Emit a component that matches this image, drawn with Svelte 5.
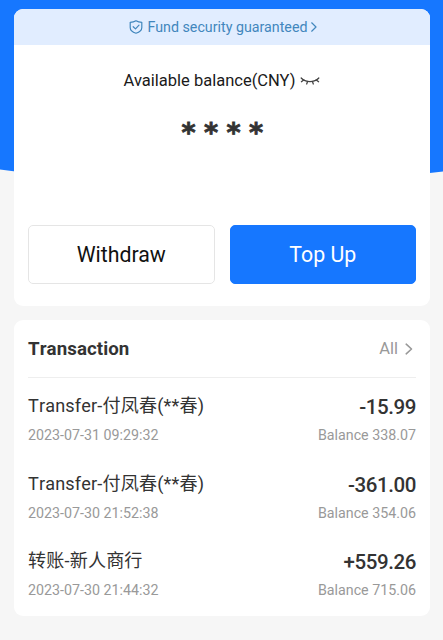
<script lang="ts">
  type Transaction = {
    title: string;
    time: string;
    amount: string;
    balance: string;
  };

  const transactions: Transaction[] = [
    { title: 'Transfer-付凤春(**春)', time: '2023-07-31 09:29:32', amount: '-15.99', balance: '338.07' },
    { title: 'Transfer-付凤春(**春)', time: '2023-07-30 21:52:38', amount: '-361.00', balance: '354.06' },
    { title: '转账-新人商行', time: '2023-07-30 21:44:32', amount: '+559.26', balance: '715.06' },
  ];
</script>

<div class="page">
  <!-- Blue header with a shallow curved bottom edge, behind the cards -->
  <svg class="backdrop" viewBox="0 0 443 190" preserveAspectRatio="none" aria-hidden="true">
    <path d="M0 0H443V171.500Q221 200 0 169.500Z" fill="#1677ff" />
  </svg>

  <section class="card account">
    <div class="banner">
      <svg class="shield" viewBox="0 0 14 14" aria-hidden="true">
        <path d="M7 .8C5.200 1.900 3.200 2.300 1.200 2.300V7.400C1.200 10.200 4 12.300 7 13.200C10 12.300 12.800 10.200 12.800 7.400V2.300C10.800 2.300 8.800 1.900 7 .8Z" />
        <path d="M4.200 6.700L6.500 8.900L10 5.200" />
      </svg>
      <span class="banner-text">Fund security guaranteed</span>
      <svg class="banner-arrow" viewBox="0 0 6 10" aria-hidden="true">
        <path d="M.7 .8L5 5L.7 9.200" />
      </svg>
    </div>

    <div class="label">
      <span>Available balance(CNY)</span>
      <svg class="eye" viewBox="0 0 20 8" aria-hidden="true">
        <path d="M1.200 1C3.500 3.500 6.500 4.600 10 4.600S16.500 3.500 18.800 1" />
        <path d="M3.700 3L1.400 4.700M7.600 4.400L6.700 7M12.400 4.400L13.300 7M16.300 3L18.600 4.700" />
      </svg>
    </div>

    <div class="hidden-balance">****</div>

    <div class="actions">
      <button class="btn">Withdraw</button>
      <button class="btn primary">Top Up</button>
    </div>
  </section>

  <section class="card history">
    <header>
      <h2>Transaction</h2>
      <a class="all" href="#all">
        All
        <svg viewBox="0 0 8 12" aria-hidden="true">
          <path d="M1.200 1.200L6.500 6L1.200 10.800" />
        </svg>
      </a>
    </header>

    <ul>
      {#each transactions as item}
        <li>
          <div class="row">
            <span class="title">{item.title}</span>
            <span class="amount">{item.amount}</span>
          </div>
          <div class="row meta">
            <span class="time">{item.time}</span>
            <span>Balance {item.balance}</span>
          </div>
        </li>
      {/each}
    </ul>
  </section>
</div>

<style>
  :global(body) {
    background: #f6f6f6;
  }
  .page {
    position: relative;
    box-sizing: border-box;
    height: 640px;
    padding: 9px 13px 0 14px;
    overflow: hidden;
    font-family: Roboto, 'Noto Sans CJK SC', sans-serif;
    color: #333;
    background: #f6f6f6;
  }
  .backdrop {
    position: absolute;
    top: 0;
    left: 0;
    width: 100%;
    height: 190px;
  }
  .card {
    position: relative;
    box-sizing: border-box;
    background: #fff;
    border-radius: 9px;
    overflow: hidden;
  }
  svg path {
    stroke-linecap: round;
    stroke-linejoin: round;
  }

  /* Account card */
  .account {
    height: 297px;
  }
  .banner {
    display: flex;
    align-items: center;
    justify-content: center;
    height: 36px;
    padding-left: 2px;
    background: #e1edff;
    color: #4287bd;
    font-size: 14.25px;
    line-height: 36px;
  }
  .banner svg {
    fill: none;
    stroke: currentColor;
    stroke-width: 1.2;
  }
  .shield {
    width: 14px;
    height: 14px;
    margin-right: 4px;
  }
  .banner-arrow {
    width: 6px;
    height: 10px;
    margin: 0 0 1px 3px;
  }
  .label {
    display: flex;
    align-items: center;
    justify-content: center;
    height: 24px;
    margin-top: 23px;
    color: #1a1a1a;
    font-size: 16.5px;
  }
  .eye {
    width: 20px;
    height: 8px;
    margin: 1px 0 0 5px;
    fill: none;
    stroke: #444;
    stroke-width: 1.3;
  }
  .hidden-balance {
    height: 40px;
    margin-top: 21px;
    padding-left: 9px;
    color: #333;
    font-family: 'DejaVu Sans', sans-serif;
    font-size: 27px;
    font-weight: 700;
    line-height: 40px;
    letter-spacing: 8.4px;
    text-align: center;
    -webkit-text-stroke: 0.8px #333;
  }
  .actions {
    display: grid;
    grid-template-columns: 1fr 1fr;
    gap: 15px;
    margin-top: 72px;
    padding: 0 14px;
  }
  .btn {
    height: 59px;
    padding: 0;
    border: 1px solid #e5e5e5;
    border-radius: 5px;
    background: #fff;
    color: #111;
    font-family: inherit;
    font-size: 21.3px;
  }
  .btn.primary {
    border-color: #1677ff;
    background: #1677ff;
    color: #fff;
  }

  /* Transaction list */
  .history {
    height: 296px;
    margin-top: 14px;
    padding: 0 14px;
  }
  header {
    display: flex;
    align-items: center;
    justify-content: space-between;
    height: 57px;
    border-bottom: 1px solid #eee;
  }
  h2 {
    margin: 0;
    font-size: 18.7px;
    font-weight: 700;
    font-kerning: none;
    letter-spacing: 0.08px;
  }
  .all {
    display: flex;
    align-items: center;
    gap: 7px;
    padding-right: 3px;
    color: #999;
    font-size: 16.5px;
    text-decoration: none;
  }
  .all svg {
    width: 8px;
    height: 12px;
    fill: none;
    stroke: currentColor;
    stroke-width: 1.6;
  }
  ul {
    margin: 0;
    padding: 14px 0 0;
    list-style: none;
  }
  li {
    height: 77.5px;
  }
  .row {
    display: flex;
    align-items: center;
    justify-content: space-between;
    height: 28px;
  }
  .title {
    font-size: 18.1px;
    line-height: 28px;
    letter-spacing: 0.15px;
    font-kerning: none;
  }
  .amount {
    padding-top: 2px;
    font-size: 20.5px;
    font-weight: 500;
    letter-spacing: -0.4px;
  }
  .meta {
    height: 20px;
    margin-top: 5px;
    color: #999;
    font-size: 14.25px;
  }
</style>
